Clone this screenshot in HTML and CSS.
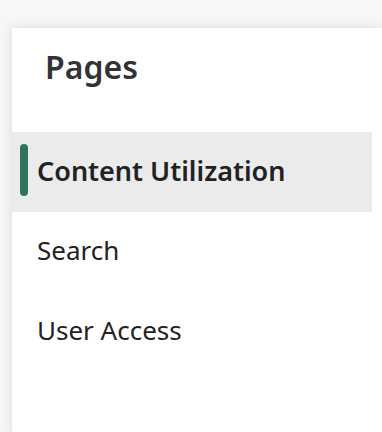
FILE: index.html
```html
<!DOCTYPE html>
<html lang="en">
<head>
    <meta charset="UTF-8">
    <meta name="viewport" content="width=device-width, initial-scale=1.0">
    <title>Pages</title>
    <link rel="stylesheet" href="styles.css">
</head>
<body>
    <div class="panel">
        <h2 class="panel-title">Pages</h2>
        <ul class="page-list">
            <li class="page-item active"><span class="marker"></span>Content Utilization</li>
            <li class="page-item">Search</li>
            <li class="page-item">User Access</li>
        </ul>
    </div>
</body>
</html>
```

FILE: styles.css
```css
body {
    font-family: "Noto Sans", "Open Sans", sans-serif;
    background-color: #f7f7f7;
    margin: 0;
    padding: 28px 0 0 12px;
    height: 432px;
    box-sizing: border-box;
    overflow: hidden;
}

.panel {
    background: #fff;
    height: 100%;
    padding-right: 10px;
    box-shadow: 0 0 12px rgba(0, 0, 0, 0.12);
}

.panel-title {
    margin: 0;
    padding: 17px 0 0 33px;
    height: 104px;
    box-sizing: border-box;
    font-size: 32px;
    line-height: 44px;
    font-weight: 600;
    color: #333;
}

.page-list {
    list-style: none;
    margin: 0;
    padding: 0;
}

.page-item {
    display: flex;
    align-items: center;
    height: 80px;
    padding-left: 25px;
    padding-bottom: 4px;
    box-sizing: border-box;
    font-size: 26px;
    color: #222;
}

.page-item.active {
    position: relative;
    background-color: #ebebeb;
    font-size: 27px;
    font-weight: 600;
}

.marker {
    position: absolute;
    left: 8px;
    top: 12px;
    width: 8px;
    height: 52px;
    border-radius: 4px;
    background-color: #2f7461;
}
```
